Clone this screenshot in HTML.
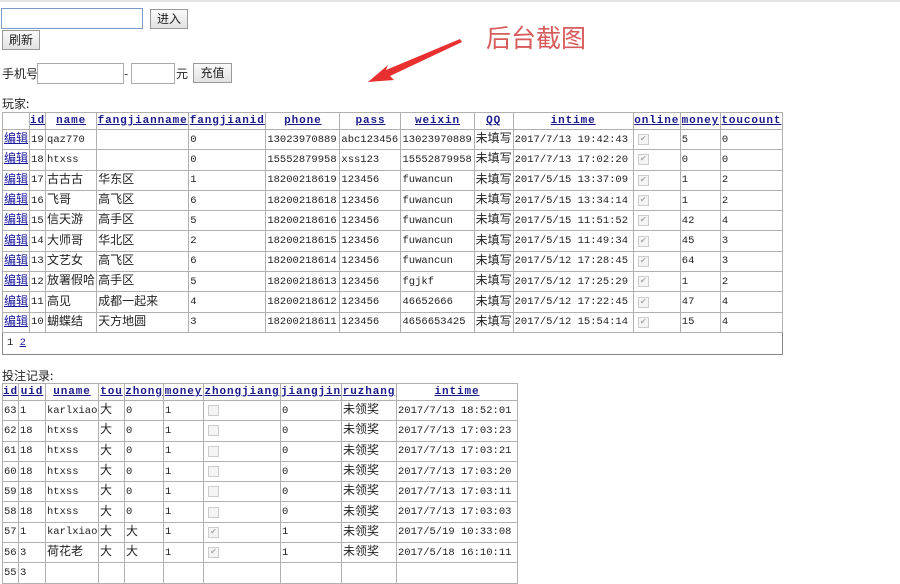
<!DOCTYPE html>
<html><head><meta charset="utf-8">
<style>
*{box-sizing:border-box}
body{margin:0;width:900px;height:568px;overflow:hidden;background:#fff;font-family:"Liberation Mono","Noto Sans CJK SC",monospace;font-size:11px;color:#222;position:relative}
.topline{position:absolute;left:0;top:0;width:900px;height:2px;background:#e4e4e4}
.abs{position:absolute}
input.t{position:absolute;border:1px solid #aaa;height:21px;background:#fff}
.btn{position:absolute;border:1px solid #999;background:linear-gradient(#fafafa,#e2e2e2);font-family:"Noto Sans CJK SC",sans-serif;font-size:12px;height:20px;line-height:18px;text-align:center;color:#222}
.lbl{position:absolute;font-family:"Noto Sans CJK SC",sans-serif;font-size:12px;line-height:14px}
table{position:absolute;border-collapse:collapse;table-layout:fixed;border:1px solid #888}
tr{height:20.3px}
td,th{border:1px solid #b0b0b0;padding:0 1px;line-height:14px;white-space:nowrap;overflow:hidden;font-size:10.5px;font-family:"Liberation Mono",monospace;text-align:left;vertical-align:middle}
td.c{font-family:"Noto Sans CJK SC",sans-serif;font-size:12px;line-height:14px;padding-bottom:3px}
tr.h{height:17px}
th{line-height:14px;text-align:center;color:#1a1a8c;text-decoration:underline;font-weight:bold;font-size:11px;letter-spacing:0.9px;padding:0}
a{color:#1a1a9c;text-decoration:underline;font-family:"Noto Sans CJK SC",sans-serif;font-size:12px;line-height:14px;display:block;margin-bottom:3px}
.cb{display:block;width:11px;height:11px;border:1px solid #ccc;background:#f4f4f4;margin-left:3px;font-size:8px;line-height:9px;color:#aaa;text-align:center}
</style></head><body>
<div class="topline"></div>
<input class="t" style="left:1px;top:8px;width:142px;border-color:#7a9cc6">
<div class="btn" style="left:150px;top:9px;width:38px">进入</div>
<div class="btn" style="left:2px;top:30px;width:38px">刷新</div>
<div class="lbl" style="left:2px;top:67px">手机号</div>
<input class="t" style="left:37px;top:63px;width:87px">
<div class="lbl" style="left:124px;top:67px">-</div>
<input class="t" style="left:131px;top:63px;width:44px">
<div class="lbl" style="left:176px;top:67px">元</div>
<div class="btn" style="left:193px;top:63px;width:39px">充值</div>
<div class="lbl" style="left:486px;top:22px;font-size:25px;line-height:30px;color:#d95a5a">后台截图</div>
<svg class="abs" style="left:360px;top:30px" width="110" height="60"><polygon points="100,9 26,40 28,35 8,52 34,50 30,46 102,12" fill="#e83030"/></svg>
<div class="lbl" style="left:2px;top:97px">玩家:</div>
<table style="left:2px;top:112px;width:781px">
<colgroup><col style="width:27px"><col style="width:16px"><col style="width:51px"><col style="width:92px"><col style="width:77px"><col style="width:74px"><col style="width:61px"><col style="width:73px"><col style="width:39px"><col style="width:120px"><col style="width:47px"><col style="width:40px"><col style="width:62px"></colgroup>
<tr class="h"><th style="text-decoration:none"></th><th>id</th><th>name</th><th>fangjianname</th><th>fangjianid</th><th>phone</th><th>pass</th><th>weixin</th><th>QQ</th><th>intime</th><th>online</th><th>money</th><th>toucount</th></tr>
<tr><td><a>编辑</a></td><td>19</td><td>qaz770</td><td></td><td>0</td><td>13023970889</td><td>abc123456</td><td>13023970889</td><td class="c">未填写</td><td>2017/7/13 19:42:43</td><td><span class="cb">✔</span></td><td>5</td><td>0</td></tr>
<tr><td><a>编辑</a></td><td>18</td><td>htxss</td><td></td><td>0</td><td>15552879958</td><td>xss123</td><td>15552879958</td><td class="c">未填写</td><td>2017/7/13 17:02:20</td><td><span class="cb">✔</span></td><td>0</td><td>0</td></tr>
<tr><td><a>编辑</a></td><td>17</td><td class="c">古古古</td><td class="c">华东区</td><td>1</td><td>18200218619</td><td>123456</td><td>fuwancun</td><td class="c">未填写</td><td>2017/5/15 13:37:09</td><td><span class="cb">✔</span></td><td>1</td><td>2</td></tr>
<tr><td><a>编辑</a></td><td>16</td><td class="c">飞哥</td><td class="c">高飞区</td><td>6</td><td>18200218618</td><td>123456</td><td>fuwancun</td><td class="c">未填写</td><td>2017/5/15 13:34:14</td><td><span class="cb">✔</span></td><td>1</td><td>2</td></tr>
<tr><td><a>编辑</a></td><td>15</td><td class="c">信天游</td><td class="c">高手区</td><td>5</td><td>18200218616</td><td>123456</td><td>fuwancun</td><td class="c">未填写</td><td>2017/5/15 11:51:52</td><td><span class="cb">✔</span></td><td>42</td><td>4</td></tr>
<tr><td><a>编辑</a></td><td>14</td><td class="c">大师哥</td><td class="c">华北区</td><td>2</td><td>18200218615</td><td>123456</td><td>fuwancun</td><td class="c">未填写</td><td>2017/5/15 11:49:34</td><td><span class="cb">✔</span></td><td>45</td><td>3</td></tr>
<tr><td><a>编辑</a></td><td>13</td><td class="c">文艺女</td><td class="c">高飞区</td><td>6</td><td>18200218614</td><td>123456</td><td>fuwancun</td><td class="c">未填写</td><td>2017/5/12 17:28:45</td><td><span class="cb">✔</span></td><td>64</td><td>3</td></tr>
<tr><td><a>编辑</a></td><td>12</td><td class="c">放署假哈</td><td class="c">高手区</td><td>5</td><td>18200218613</td><td>123456</td><td>fgjkf</td><td class="c">未填写</td><td>2017/5/12 17:25:29</td><td><span class="cb">✔</span></td><td>1</td><td>2</td></tr>
<tr><td><a>编辑</a></td><td>11</td><td class="c">高见</td><td class="c">成都一起来</td><td>4</td><td>18200218612</td><td>123456</td><td>46652666</td><td class="c">未填写</td><td>2017/5/12 17:22:45</td><td><span class="cb">✔</span></td><td>47</td><td>4</td></tr>
<tr><td><a>编辑</a></td><td>10</td><td class="c">蝴蝶结</td><td class="c">天方地圆</td><td>3</td><td>18200218611</td><td>123456</td><td>4656653425</td><td class="c">未填写</td><td>2017/5/12 15:54:14</td><td><span class="cb">✔</span></td><td>15</td><td>4</td></tr>
<tr style="height:22px"><td colspan="13" style="padding-left:4px;border-color:#888">1 <span style="color:#1a1a9c;text-decoration:underline">2</span></td></tr>
</table>
<div class="lbl" style="left:2px;top:369px">投注记录:</div>
<table style="left:2px;top:383px;width:515px">
<colgroup><col style="width:16px"><col style="width:27px"><col style="width:53px"><col style="width:26px"><col style="width:39px"><col style="width:40px"><col style="width:77px"><col style="width:61px"><col style="width:55px"><col style="width:121px"></colgroup>
<tr class="h"><th>id</th><th>uid</th><th>uname</th><th>tou</th><th>zhong</th><th>money</th><th>zhongjiang</th><th>jiangjin</th><th>ruzhang</th><th>intime</th></tr>
<tr><td>63</td><td>1</td><td>karlxiao</td><td class="c">大</td><td>0</td><td>1</td><td><span class="cb"></span></td><td>0</td><td class="c">未领奖</td><td>2017/7/13 18:52:01</td></tr>
<tr><td>62</td><td>18</td><td>htxss</td><td class="c">大</td><td>0</td><td>1</td><td><span class="cb"></span></td><td>0</td><td class="c">未领奖</td><td>2017/7/13 17:03:23</td></tr>
<tr><td>61</td><td>18</td><td>htxss</td><td class="c">大</td><td>0</td><td>1</td><td><span class="cb"></span></td><td>0</td><td class="c">未领奖</td><td>2017/7/13 17:03:21</td></tr>
<tr><td>60</td><td>18</td><td>htxss</td><td class="c">大</td><td>0</td><td>1</td><td><span class="cb"></span></td><td>0</td><td class="c">未领奖</td><td>2017/7/13 17:03:20</td></tr>
<tr><td>59</td><td>18</td><td>htxss</td><td class="c">大</td><td>0</td><td>1</td><td><span class="cb"></span></td><td>0</td><td class="c">未领奖</td><td>2017/7/13 17:03:11</td></tr>
<tr><td>58</td><td>18</td><td>htxss</td><td class="c">大</td><td>0</td><td>1</td><td><span class="cb"></span></td><td>0</td><td class="c">未领奖</td><td>2017/7/13 17:03:03</td></tr>
<tr><td>57</td><td>1</td><td>karlxiao</td><td class="c">大</td><td class="c">大</td><td>1</td><td><span class="cb">✔</span></td><td>1</td><td class="c">未领奖</td><td>2017/5/19 10:33:08</td></tr>
<tr><td>56</td><td>3</td><td class="c">荷花老</td><td class="c">大</td><td class="c">大</td><td>1</td><td><span class="cb">✔</span></td><td>1</td><td class="c">未领奖</td><td>2017/5/18 16:10:11</td></tr>
<tr><td>55</td><td>3</td><td></td><td></td><td></td><td></td><td></td><td></td><td></td><td></td></tr>
</table>
</body></html>
